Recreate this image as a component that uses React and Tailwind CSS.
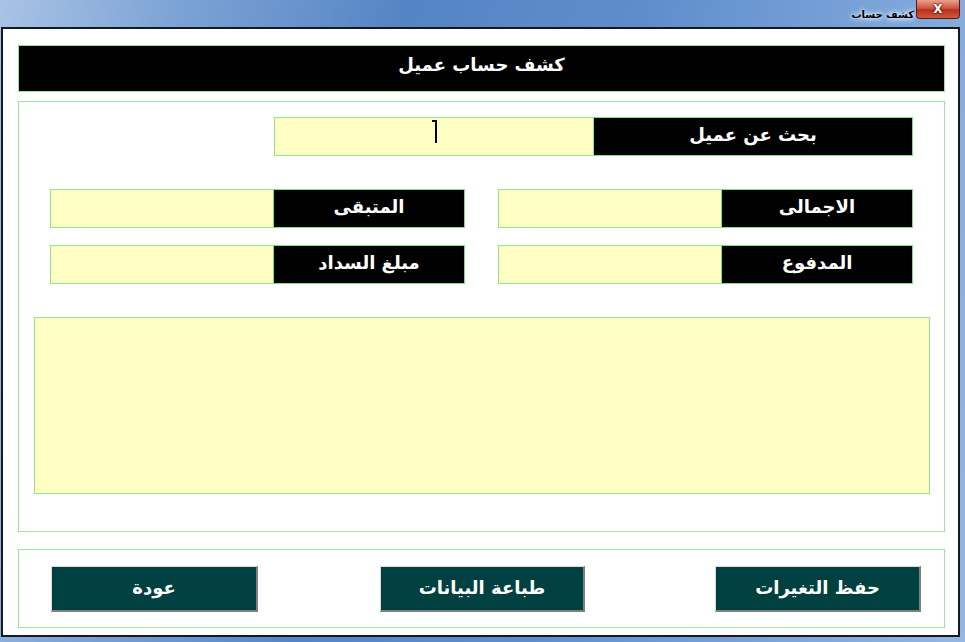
const arabic = "font-['DejaVu_Sans','Noto_Sans',sans-serif]";

function Field({ label }) {
  return (
    <div className="flex h-[39px] w-[415px]">
      <div className="w-[224px] border border-[#93e493] bg-[#ffffc4]" />
      <div className={`-ml-px flex flex-1 items-center justify-center border border-[#7fdc7f] bg-black pb-[5px] text-[18px] font-bold text-white ${arabic}`} dir="rtl">
        {label}
      </div>
    </div>
  );
}

function FormButton({ children }) {
  return (
    <button className={`flex h-[46px] w-full items-center justify-center border-t border-l border-t-[#d8dcd8] border-l-[#d8dcd8] border-r-2 border-b-2 border-r-[#7d807d] border-b-[#7d807d] bg-[#004040] pb-[3px] text-[18px] font-bold text-white ${arabic}`} dir="rtl">
      {children}
    </button>
  );
}

export default function App() {
  return (
    <div className="flex h-[642px] w-[965px] flex-col overflow-hidden bg-[linear-gradient(100deg,#a9c3e6_0%,#7ea4d6_16%,#5584c4_38%,#5f8dcc_60%,#7ea6da_84%,#94b6e2_100%)]">
      {/* title bar */}
      <div className="flex h-[27px] items-start justify-end pr-[5px]">
        <span className={`mt-[7px] mr-[2px] text-[10px] font-bold text-black [text-shadow:0_0_4px_#ffffff,0_0_6px_#ffffff] ${arabic}`} dir="rtl">
          كشف حساب
        </span>
        <div className="flex h-[19px] w-[44px] items-center justify-center rounded-b-[4px] border border-t-0 border-[#5a1a14] bg-[linear-gradient(180deg,#e8a48f_0%,#d2553f_45%,#b8301c_55%,#d05a3c_100%)]">
          <span className="font-['DejaVu_Sans',sans-serif] text-[12px] leading-none font-bold text-white [text-shadow:0_0_2px_#3a0a00,0_0_2px_#3a0a00]">
            X
          </span>
        </div>
      </div>

      {/* window body */}
      <div className="ml-px flex h-[610px] w-[959px] flex-col border-2 border-[#141a22] bg-white pt-[16px] pr-[13px] pb-[7px] pl-[15px]">
        <div className={`flex h-[47px] justify-center border border-[#93e493] bg-black pt-[5px] text-[18px] font-bold text-white ${arabic}`} dir="rtl">
          كشف حساب عميل
        </div>

        <div className="mt-[9px] flex h-[431px] flex-col border border-[#9ee69e] px-[31px] pt-[15px]">
          <div className="flex justify-end">
            <div className="flex h-[39px] w-[639px]">
              <div className="relative w-[320px] border border-[#93e493] bg-[#ffffc4]">
                <span className="absolute top-[2px] left-[160px] h-[23px] w-[2px] bg-black" />
                <span className="absolute top-[2px] left-[157px] h-[2px] w-[4px] bg-black" />
              </div>
              <div className={`-ml-px flex flex-1 items-center justify-center border border-[#7fdc7f] bg-black pb-[5px] text-[18px] font-bold text-white ${arabic}`} dir="rtl">
                بحث عن عميل
              </div>
            </div>
          </div>

          <div className="mt-[33px] flex justify-between">
            <Field label="المتبقى" />
            <Field label="الاجمالى" />
          </div>
          <div className="mt-[17px] flex justify-between">
            <Field label="مبلغ السداد" />
            <Field label="المدفوع" />
          </div>

          <div className="mt-[33px] -mr-[17px] -ml-[16px] h-[177px] border border-[#93e493] bg-[#ffffc4]" />
        </div>

        <div className="mt-[17px] flex h-[79px] items-start border border-[#9ee69e] pt-[16px] pl-[32px]">
          <div className="w-[207px]">
            <FormButton>عودة</FormButton>
          </div>
          <div className="ml-[122px] w-[205px]">
            <FormButton>طباعة البيانات</FormButton>
          </div>
          <div className="ml-[130px] w-[206px]">
            <FormButton>حفظ التغيرات</FormButton>
          </div>
        </div>
      </div>
    </div>
  );
}
